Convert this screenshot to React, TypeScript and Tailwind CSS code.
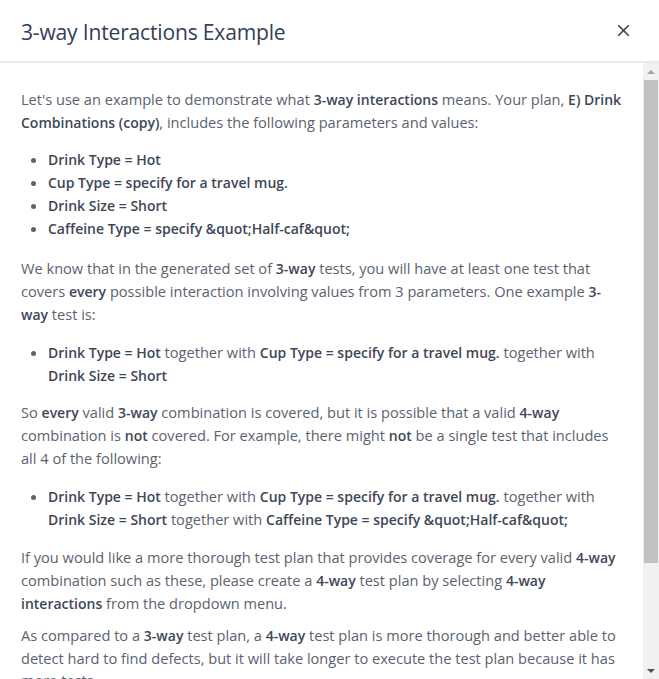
import { X } from "lucide-react";

const B = ({ children }: { children: React.ReactNode }) => (
  <b className="font-semibold text-[14px] text-[#3e4757]">{children}</b>
);

const drinkTypes = [
  "Drink Type = Hot",
  "Cup Type = specify for a travel mug.",
  "Drink Size = Short",
  "Caffeine Type = specify &quot;Half-caf&quot;",
];

export default function App() {
  return (
    <div className="w-[659px] h-[679px] bg-white flex flex-col font-['Open_Sans',sans-serif] text-[#5b6270]">
      {/* Header */}
      <div className="h-[63px] shrink-0 flex items-center justify-between pl-[21px] pr-[26px] border-b-2 border-[#e9eaee]">
        <h1 className="text-[21.1px] text-[#344055] tracking-[-0.2px] mt-[2px]">3-way Interactions Example</h1>
        <X className="w-[19px] h-[19px] text-[#3a4963]" strokeWidth={2.2} />
      </div>

      {/* Body */}
      <div className="flex-1 min-h-0 flex">
        <div className="flex-1 overflow-hidden pl-[21px] pr-[21px] pt-[25px] text-[14.6px] leading-[22px]">
          <p className="mb-[10px]">
            Let's use an example to demonstrate what <B>3-way interactions</B> means. Your plan,{" "}
            <B>E) Drink Combinations (copy)</B>, includes the following parameters and values:
          </p>
          <ul className="list-disc pl-[27px] mt-[14px] mb-[17px] leading-[23px]">
            {drinkTypes.map((t) => (
              <li key={t}>
                <B>{t}</B>
              </li>
            ))}
          </ul>
          <p className="mb-[10px]">
            We know that in the generated set of <B>3-way</B> tests, you will have at least one test that
            covers <B>every</B> possible interaction involving values from 3 parameters. One example{" "}
            <B>3-way</B> test is:
          </p>
          <ul className="list-disc pl-[27px] mt-[15px] mb-[14px] leading-[23px]">
            <li>
              <B>Drink Type = Hot</B> together with <B>Cup Type = specify for a travel mug.</B> together with{" "}
              <B>Drink Size = Short</B>
            </li>
          </ul>
          <p className="mb-[10px]">
            So <B>every</B> valid <B>3-way</B> combination is covered, but it is possible that a valid{" "}
            <B>4-way</B> combination is <B>not</B> covered. For example, there might <B>not</B> be a single
            test that includes all 4 of the following:
          </p>
          <ul className="list-disc pl-[27px] mt-[16px] mb-[15px] leading-[23px]">
            <li>
              <B>Drink Type = Hot</B> together with <B>Cup Type = specify for a travel mug.</B> together with{" "}
              <B>Drink Size = Short</B> together with{" "}
              <B>Caffeine Type = specify &amp;quot;Half-caf&amp;quot;</B>
            </li>
          </ul>
          <p className="mb-[9px]">
            If you would like a more thorough test plan that provides coverage for every valid{" "}
            <B>4-way</B> combination such as these, please create a <B>4-way</B> test plan by selecting{" "}
            <B>4-way interactions</B> from the dropdown menu.
          </p>
          <p className="mb-[10px]">
            As compared to a <B>3-way</B> test plan, a <B>4-way</B> test plan is more thorough and better
            able to detect hard to find defects, but it will take longer to execute the test plan because it
            has more tests.
          </p>
        </div>

        {/* Scrollbar */}
        <div className="w-[16px] shrink-0 bg-[#f1f1f1] flex flex-col items-center">
          <div className="h-[17px] shrink-0 flex items-center justify-center">
            <div className="w-0 h-0 border-l-[4px] border-r-[4px] border-b-[4px] border-l-transparent border-r-transparent border-b-[#a3a3a3]" />
          </div>
          <div className="w-[14px] h-[483px] bg-[#c1c1c1]" />
          <div className="flex-1" />
          <div className="h-[17px] shrink-0 flex items-center justify-center">
            <div className="w-0 h-0 border-l-[4px] border-r-[4px] border-t-[4px] border-l-transparent border-r-transparent border-t-[#505050]" />
          </div>
        </div>
      </div>
    </div>
  );
}
